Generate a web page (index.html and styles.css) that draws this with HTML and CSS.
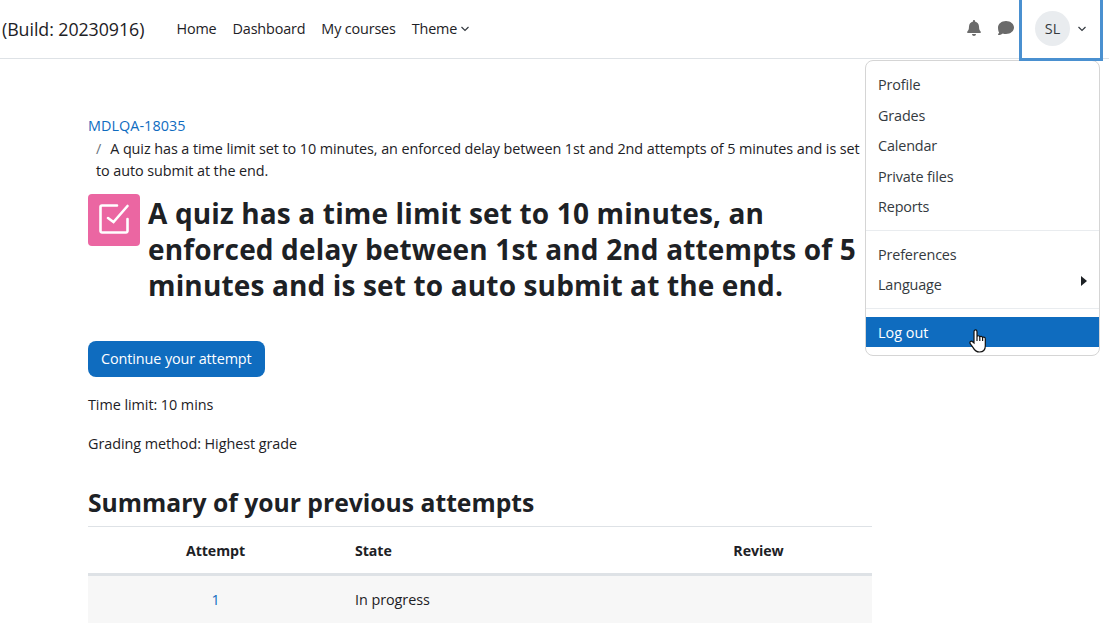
FILE: index.html
```html
<!DOCTYPE html>
<html lang="en">
<head>
  <meta charset="UTF-8" />
  <meta name="viewport" content="width=device-width, initial-scale=1.0" />
  <title>MDLQA-18035: Quiz</title>
  <link rel="stylesheet" href="styles.css">
</head>
<body>
  <nav class="navbar">
    <span class="brand">(Build: 20230916)</span>
    <ul class="primary-nav">
      <li><a href="#">Home</a></li>
      <li><a href="#">Dashboard</a></li>
      <li><a href="#">My courses</a></li>
      <li><a href="#">Theme</a>
        <svg class="caret" width="8" height="6" viewBox="0 0 8 6"><path d="M.5 1L4 4.500 7.500 1" /></svg>
      </li>
    </ul>
    <div class="user-nav">
      <svg class="bell" width="14" height="16" viewBox="0 0 448 512"><path d="M224 0c-18 0-32 14-32 32v19C119 66 64 131 64 208c0 105-26 130-56 166-15 19-1 42 24 42h384c25 0 39-23 24-42-30-36-56-61-56-166 0-77-55-142-128-157V32c0-18-14-32-32-32zM160 448c0 35 29 64 64 64s64-29 64-64z" /></svg>
      <svg class="chat" width="16" height="16" viewBox="0 0 512 512"><path d="M512 240c0 114.900-114.600 208-256 208-37.100 0-72.300-6.400-104.100-17.900-11.900 8.700-31.300 20.600-54.300 30.600C73.600 471.100 44.700 480 16 480c-6.500 0-12.300-3.900-14.800-9.900s-1.100-12.800 3.400-17.400c.7-.8 20-22 32.300-49.900C14.400 372.500 0 309.400 0 240 0 125.100 114.600 32 256 32s256 93.100 256 208z" /></svg>
      <div class="user-menu">
        <button class="user-toggle">
          <span class="avatar">SL</span>
          <svg class="caret" width="8" height="6" viewBox="0 0 8 6"><path d="M.5 1L4 4.500 7.500 1" /></svg>
        </button>
        <div class="dropdown">
          <a href="#">Profile</a>
          <a href="#">Grades</a>
          <a href="#">Calendar</a>
          <a href="#">Private files</a>
          <a href="#">Reports</a>
          <hr>
          <a href="#">Preferences</a>
          <a class="has-submenu" href="#">Language
            <svg width="6" height="10" viewBox="0 0 6 10"><path d="M0 0l6 5-6 5z" /></svg>
          </a>
          <hr>
          <a class="active" href="#">Log out</a>
          <svg class="pointer" width="18" height="24" viewBox="0 0 18 24"><path d="M5 14V2.800C5 .3 8 .3 8 2.800V8c0-1.700 2.800-1.700 2.800.4 0-1.600 2.800-1.500 2.800.6 0-1.400 2.700-1.200 2.700.8V17c0 3.600-2.300 6-5.900 6-3.500 0-4.800-1.600-6.300-4.400L1.200 14.700c-1-2 1.100-3.300 2.400-1.900zM8 8v4M10.800 8.400V12M13.600 9v3" /></svg>
        </div>
      </div>
    </div>
  </nav>

  <main class="page">
    <ol class="breadcrumb">
      <li><a href="#">MDLQA-18035</a></li>
      <li class="current">A quiz has a time limit set to 10 minutes, an enforced delay between 1st and 2nd attempts of 5 minutes and is set to auto submit at the end.</li>
    </ol>

    <header class="page-header">
      <div class="activity-icon">
        <svg width="32" height="32" viewBox="0 0 32 32"><path d="M19 2.500H4A1.500 1.500 0 0 0 2.500 4v24A1.500 1.500 0 0 0 4 29.500h24a1.500 1.500 0 0 0 1.500-1.500V16M10 15l5.500 4L29.500 3" /></svg>
      </div>
      <h1>A quiz has a time limit set to 10 minutes, an enforced delay between 1st and 2nd attempts of 5 minutes and is set to auto submit at the end.</h1>
    </header>

    <button class="continue-btn">Continue your attempt</button>

    <p class="time-limit">Time limit: 10 mins</p>
    <p class="grading">Grading method: Highest grade</p>

    <h2>Summary of your previous attempts</h2>
    <table class="attempts">
      <thead>
        <tr>
          <th class="col-attempt">Attempt</th>
          <th class="col-state">State</th>
          <th class="col-review">Review</th>
        </tr>
      </thead>
      <tbody>
        <tr>
          <td class="col-attempt"><a href="#">1</a></td>
          <td class="col-state">In progress</td>
          <td class="col-review"></td>
        </tr>
      </tbody>
    </table>
  </main>
</body>
</html>
```
FILE: styles.css
```css
* { box-sizing: border-box; }
body { margin: 0; background: #fff; color: #1d2125; font-family: "Open Sans", "Noto Sans", sans-serif; font-size: 14.4px; font-weight: 400; line-height: 22.5px; letter-spacing: -.06px; overflow: hidden; }
a { color: #0f6cbf; text-decoration: none; }
ul, ol { list-style: none; margin: 0; padding: 0; }

.navbar { display: flex; align-items: center; height: 59px; border-bottom: 1px solid #dee2e6; white-space: nowrap; }
.brand { width: 176.5px; padding-left: 2px; font-size: 17.8px; }
.primary-nav { display: flex; gap: 16px; }
.primary-nav li { display: flex; align-items: center; gap: 4px; }
.primary-nav a { color: #1d2125; letter-spacing: -.16px; }
.caret { fill: none; stroke: #343a40; stroke-width: 1.2; }
.user-nav { display: flex; align-items: center; margin-left: auto; padding-right: 6px; }
.bell, .chat { fill: #6a6a6a; }
.bell { margin-bottom: 2px; }
.chat { margin: 0 5px 2px 17px; }
.user-menu { position: relative; }
.user-toggle { display: flex; align-items: center; gap: 8px; width: 84px; height: 61px; margin-top: 2px; padding: 0 0 1px 13px; border: 3px solid #4a90d0; border-top: 0; background: #fff; font: inherit; }
.avatar { width: 35px; height: 35px; border-radius: 50%; background: #e9ecef; color: #343a40; line-height: 35px; text-align: center; }
.user-toggle .caret { margin-top: 2px; }

.dropdown { position: absolute; z-index: -1; top: 62px; right: 3px; width: 235px; height: 296px; padding: 9px 0; border: 1px solid #d5d5d5; border-radius: 8px; background: #fff; }
.dropdown a { display: block; height: 30.5px; padding: 4.5px 12px; color: #343a40; letter-spacing: -.15px; }
.dropdown hr { margin: 7.5px 0 8.5px; border: 0; border-top: 1px solid #e9ecef; }
.dropdown .has-submenu { display: flex; justify-content: space-between; }
.has-submenu svg { margin-top: 2px; fill: #1d2125; }
.dropdown .active { height: 30px; padding-top: 5px; background: #0f6cbf; color: #fff; letter-spacing: 0; }
.pointer { position: absolute; left: 103px; top: 268px; fill: #fff; stroke: #111; stroke-width: 1.2; }

.page { width: 784px; margin: 56px 0 0 88px; }
.breadcrumb a { letter-spacing: .05px; }
.breadcrumb .current { padding: 0 8px; letter-spacing: -.08px; }
.breadcrumb .current::before { content: "/"; padding-right: 9px; color: #6a737b; }
.page-header { display: flex; gap: 8px; margin-top: 12px; }
.activity-icon { display: flex; flex: none; align-items: center; justify-content: center; width: 52px; height: 52px; margin-top: -1px; border-radius: 4px; background: #eb66a2; }
.activity-icon svg { margin-top: -2px; fill: none; stroke: #fff; stroke-width: 2.6; stroke-linecap: round; }
h1, h2 { margin: 0; font-weight: 700; letter-spacing: 0; }
h1 { font-size: 28px; line-height: 36px; letter-spacing: .15px; }
.continue-btn { display: block; height: 36px; margin-top: 38px; padding: 2px 13px 0; border: 0; border-radius: 8px; background: #0f6cbf; color: #fff; font: inherit; letter-spacing: -.1px; }
.time-limit, .grading { margin: 17px 0 0; }
h2 { margin-top: 31px; font-size: 24.7px; line-height: 32px; }
.attempts { width: 100%; margin-top: 7px; border-collapse: separate; border-spacing: 0; table-layout: fixed; }
.attempts th, .attempts td { height: 47px; padding: 2px 12px 0; text-align: center; }
.attempts th { height: 50px; padding-top: 3px; border-top: 1px solid #dee2e6; border-bottom: 3px solid #dee2e6; font-size: 14.2px; }
.attempts td { background: #f7f7f7; }
.attempts .col-attempt { width: 255px; }
.attempts .col-state { text-align: left; }
.attempts .col-review { width: 227px; }
```
